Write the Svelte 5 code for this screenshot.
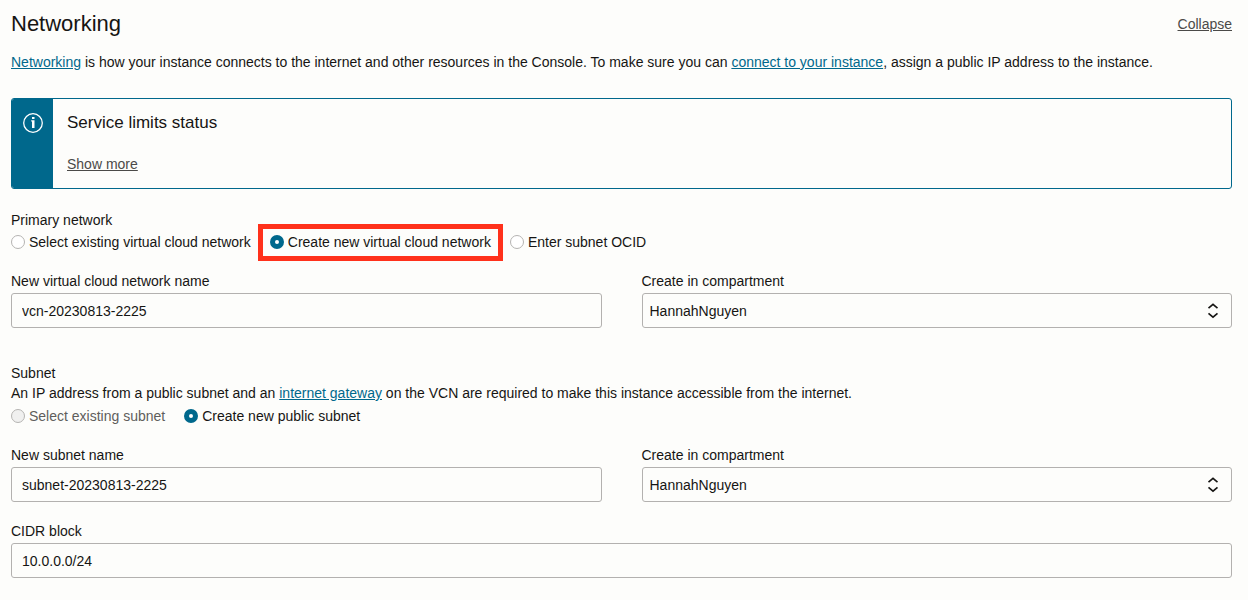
<script>
  let network = $state('create');
  let subnet = $state('create');
  let vcnName = $state('vcn-20230813-2225');
  let subnetName = $state('subnet-20230813-2225');
  let cidr = $state('10.0.0.0/24');
</script>

{#snippet compartment(id)}
  <div class="field">
    <label for={id}>Create in compartment</label>
    <div class="select">
      <select {id}><option>HannahNguyen</option></select>
      <svg viewBox="0 0 12 16" width="12" height="16" aria-hidden="true">
        <path d="M1.500 5.200 6 1.300 10.500 5.200M1.500 10.300 6 14.200 10.500 10.300" fill="none" stroke="#161513" stroke-width="1.600" />
      </svg>
    </div>
  </div>
{/snippet}

<main>
  <header>
    <h1>Networking</h1>
    <a class="quiet" href="#collapse">Collapse</a>
  </header>
  <p class="intro"><a href="#networking">Networking</a> is how your instance connects to the internet and other resources in the Console. To make sure you can <a href="#connect">connect to your instance</a>, assign a public IP address to the instance.</p>

  <section class="notice">
    <div class="stripe">
      <svg viewBox="0 0 22 22" width="22" height="22" aria-hidden="true">
        <circle cx="11" cy="11" r="9.300" fill="none" stroke="#fff" stroke-width="1.300" />
        <path d="M10 5h2.500v2H10zM9.200 8.300h3.300V16H10V9.500h-.8z" fill="#fff" />
      </svg>
    </div>
    <div class="notice-body">
      <h2>Service limits status</h2>
      <a class="quiet" href="#more">Show more</a>
    </div>
  </section>

  <fieldset class="network">
    <legend>Primary network</legend>
    <div class="radios">
      <label><input type="radio" value="existing" bind:group={network} /><span>Select existing virtual cloud network</span></label>
      <label class="marked"><input type="radio" value="create" bind:group={network} /><span>Create new virtual cloud network</span></label>
      <label><input type="radio" value="ocid" bind:group={network} /><span>Enter subnet OCID</span></label>
    </div>
  </fieldset>

  <div class="pair">
    <div class="field">
      <label for="vcn">New virtual cloud network name</label>
      <input id="vcn" type="text" bind:value={vcnName} />
    </div>
    {@render compartment('vcn-compartment')}
  </div>

  <fieldset class="subnet">
    <legend>Subnet</legend>
    <p>An IP address from a public subnet and an <a href="#gateway">internet gateway</a> on the VCN are required to make this instance accessible from the internet.</p>
    <div class="radios wide">
      <label class="disabled"><input type="radio" value="existing" bind:group={subnet} disabled /><span>Select existing subnet</span></label>
      <label><input type="radio" value="create" bind:group={subnet} /><span>Create new public subnet</span></label>
    </div>
  </fieldset>

  <div class="pair">
    <div class="field">
      <label for="subnet-name">New subnet name</label>
      <input id="subnet-name" type="text" bind:value={subnetName} />
    </div>
    {@render compartment('subnet-compartment')}
  </div>

  <div class="field cidr">
    <label for="cidr">CIDR block</label>
    <input id="cidr" type="text" bind:value={cidr} />
  </div>
</main>

<style>
  :global(body) { margin: 0; background: #fdfdfb; }
  main {
    padding: 10px 16px 22px 11px;
    color: #161513;
    font: 14px/20px "Liberation Sans", Arial, sans-serif;
  }
  h1, h2, p { margin: 0; font-weight: 400; }
  header { display: flex; justify-content: space-between; align-items: center; }
  h1 { font-size: 22px; line-height: 28px; }
  a { color: #00688c; text-underline-offset: 1px; }
  .quiet { color: #4b4a48; }
  .intro { margin-top: 14px; }
  .notice {
    display: flex;
    margin-top: 26px;
    border: 1px solid #00688c;
    border-radius: 3px;
    overflow: hidden;
  }
  .stripe { width: 41px; background: #00688c; padding-top: 13px; display: flex; justify-content: center; }
  .notice-body { padding: 12px 14px 14px; }
  h2 { font-size: 17px; line-height: 24px; margin-bottom: 19px; }
  fieldset { margin: 0; padding: 0; border: 0; min-width: 0; }
  legend { padding: 0; }
  .network { margin-top: 21px; }
  .network .radios { margin-top: -6px; }
  .radios { display: flex; align-items: flex-start; flex-wrap: wrap; gap: 7px; }
  .radios label { display: flex; align-items: center; gap: 4px; }
  .network label { padding: 8px 0 9px; }
  .radios.wide { gap: 19px; margin-top: 3px; }
  .network .marked { border: 5px solid #ff311b; padding: 3px 7px 4px; }
  .disabled { color: #5f5e5c; }
  input[type="radio"] {
    appearance: none;
    box-sizing: border-box;
    width: 14px;
    height: 14px;
    margin: 0;
    border: 1px solid #b5b4b2;
    border-radius: 50%;
    background: #fff;
  }
  input[type="radio"]:checked { border: 5px solid #00688c; }
  input[type="radio"]:disabled { background: #f0f0ef; }
  .pair { display: grid; grid-template-columns: 1fr 1fr; gap: 40px; margin-top: 10px; }
  .field { display: flex; flex-direction: column; gap: 2px; }
  input[type="text"], select {
    box-sizing: border-box;
    width: 100%;
    height: 35px;
    margin: 0;
    padding: 0 10px;
    border: 1px solid #b3b1af;
    border-radius: 3px;
    background: #fdfdfb;
    color: inherit;
    font: inherit;
  }
  .select { display: grid; align-items: center; }
  .select > * { grid-area: 1 / 1; }
  select { appearance: none; padding: 0 7px; }
  .select svg { justify-self: end; margin-right: 13px; pointer-events: none; }
  .subnet { margin-top: 35px; }
  .subnet + .pair { margin-top: 19px; }
  .cidr { margin-top: 19px; }
</style>
